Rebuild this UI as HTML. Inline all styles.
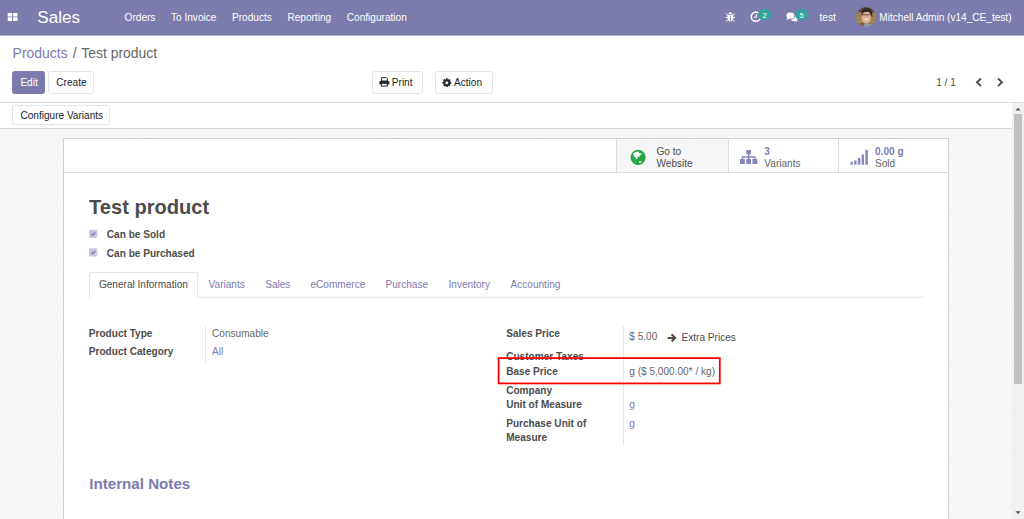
<!DOCTYPE html>
<html><head><meta charset="utf-8">
<style>
*{box-sizing:border-box;margin:0;padding:0}
html,body{width:1024px;height:519px;overflow:hidden;background:#fff;font-family:"Liberation Sans",sans-serif;color:#4c4c4c;font-size:10.08px}
.abs{position:absolute;white-space:nowrap}
#nav{left:0;top:0;width:1024px;height:35px;background:#7c7bad}
#nav .t{color:#fff;font-size:10.08px;top:12px;line-height:12px}
.btn{border:1px solid #e1e4e8;border-radius:2.5px;background:#fff}
.bt{color:#212529;font-size:10.08px;line-height:12px}
.lbl{font-weight:bold;color:#4c4c4c;font-size:10.08px;line-height:12px}
.val{color:#666;font-size:10.08px;line-height:12px}
.lnk{color:#7c7bad}
.dk{color:#4c4c4c}
.badge{background:#34a39b;border-radius:5.5px;color:#fff;font-size:7px;line-height:13px;font-weight:normal;text-align:center;width:12.8px;height:10.700px}
</style></head><body>
<div class="abs" id="nav"></div>
<div class="abs" style="left:0;top:34px;width:1024px;height:1px;background:#7878a9"></div>
<div class="abs" style="left:0;top:35px;width:1024px;height:1px;background:#aeadcd"></div>
<div class="abs" id="nav" style="background:none">
  <svg class="abs" style="left:7px;top:12px" width="12" height="10" viewBox="0 0 12 10"><g fill="#fff"><rect x="0.700" y="1" width="4.500" height="3.600" rx=".4"/><rect x="6" y="1" width="4.500" height="3.600" rx=".4"/><rect x="0.700" y="5.300" width="4.500" height="3.600" rx=".4"/><rect x="6" y="5.300" width="4.500" height="3.600" rx=".4"/></g></svg>
  <div class="abs t" style="left:37.3px;top:8px;font-size:17.05px;line-height:20px">Sales</div>
  <div class="abs t" style="left:124.6px">Orders</div>
  <div class="abs t" style="left:171px">To Invoice</div>
  <div class="abs t" style="left:232px">Products</div>
  <div class="abs t" style="left:287.4px">Reporting</div>
  <div class="abs t" style="left:346.8px">Configuration</div>
  <!-- bug -->
  <svg class="abs" style="left:725px;top:11px" width="11" height="12" viewBox="0 0 11 12"><g fill="none" stroke="#fff" stroke-width="1" stroke-linecap="butt"><path d="M0.900 2.600 L3 4.600 M9.800 2.600 L7.700 4.600 M0.600 6.400 H3 M10.100 6.400 H7.700 M1.100 10.600 L3 8.600 M9.600 10.600 L7.700 8.600"/></g><path d="M3.500 3 a1.850 1.800 0 0 1 3.700 0 z" fill="#fff"/><path d="M2.500 3.700 H8.200 V7.600 a2.850 2.800 0 0 1 -5.700 0 z" fill="#fff"/><rect x="5" y="4.600" width=".7" height="5.300" fill="#7c7bad"/></svg>
  <!-- clock -->
  <svg class="abs" style="left:750px;top:11px" width="12" height="12" viewBox="0 0 12 12"><circle cx="5.900" cy="5.700" r="4.600" fill="none" stroke="#fff" stroke-width="1.600"/><path d="M6.300 3.300 V6.200 H4" fill="none" stroke="#fff" stroke-width="1.100"/></svg>
  <div class="abs badge" style="left:758.3px;top:9px">2</div>
  <!-- comments -->
  <svg class="abs" style="left:785px;top:11px" width="14" height="12" viewBox="0 0 14 12"><ellipse cx="9.400" cy="7.500" rx="3.500" ry="2.700" fill="#fff"/><path d="M10.800 9.200 L12.900 10.900 L9.400 10z" fill="#fff"/><ellipse cx="5.400" cy="4.600" rx="4.400" ry="3.500" fill="#fff" stroke="#7c7bad" stroke-width=".9"/><path d="M2.300 6.600 L1.500 9 L4.700 7.700z" fill="#fff"/></svg>
  <div class="abs badge" style="left:795.2px;top:9px">5</div>
  <div class="abs t" style="left:819.5px">test</div>
  <!-- avatar -->
  <svg class="abs" style="left:856px;top:7px" width="20" height="20" viewBox="0 0 20 20"><defs><clipPath id="av"><circle cx="10" cy="10" r="9.900"/></clipPath><filter id="bl" x="-10%" y="-10%" width="120%" height="120%"><feGaussianBlur stdDeviation="0.4"/></filter></defs><g clip-path="url(#av)"><g filter="url(#bl)"><rect width="20" height="20" fill="#9a7b48"/><rect width="20" height="5" fill="#5e4a33"/><rect x="0" y="7" width="20" height="1" fill="#b2935c"/><rect x="0" y="10.500" width="20" height="1" fill="#b2935c"/><rect x="0" y="14" width="20" height="1" fill="#b2935c"/><path d="M1 20 Q4 14.500 10 15.500 Q17 15 19 20z" fill="#8b6244"/><path d="M7 20 Q8 16 12 16.300 Q16.500 16.500 17.500 20z" fill="#8d999b"/><ellipse cx="10.300" cy="10.200" rx="4.800" ry="6.300" fill="#dbb09a"/><path d="M5.300 8.500 Q4.800 1.500 10.500 1.300 Q17 1.300 16.300 9.500 Q15.600 10.500 15 8 Q14.500 5 12 4.700 Q7.500 4.300 6.200 7 Q5.800 8.500 5.300 8.500z" fill="#2f2622"/><rect x="6" y="7.300" width="8.800" height="1" fill="#4a3832" opacity=".85"/><ellipse cx="10.500" cy="12.200" rx="1.900" ry=".9" fill="#f2e4de"/></g></g></svg>
  <div class="abs t" style="left:879.3px">Mitchell Admin (v14_CE_test)</div>
</div>
<!-- control panel -->
<div class="abs" style="left:12.6px;top:44.3px;font-size:13.96px;line-height:18px;color:#7c7bad">Products</div>
<div class="abs" style="left:72.7px;top:44.3px;font-size:13.96px;line-height:18px;color:#666">/</div>
<div class="abs" style="left:81.2px;top:44.3px;font-size:13.96px;line-height:18px;color:#666">Test product</div>
<div class="abs btn" style="left:12px;top:71px;width:33px;height:23px;background:#7c7bad;border-color:#7c7bad"></div>
<div class="abs bt" style="left:20.4px;top:76.5px;color:#fff">Edit</div>
<div class="abs btn" style="left:48px;top:71px;width:46px;height:23px"></div>
<div class="abs bt" style="left:56.3px;top:76.5px">Create</div>
<div class="abs btn" style="left:372px;top:71px;width:51px;height:23px"></div>
<svg class="abs" style="left:379px;top:77px" width="11" height="10" viewBox="0 0 11 10"><path d="M2.400 0.700 H7.300 L8.400 1.800 V4 H2.400z" fill="#fff" stroke="#212529" stroke-width="1"/><path d="M0.400 4.900 a1 1 0 0 1 1 -1 H9.400 a1 1 0 0 1 1 1 V7.600 H0.400z" fill="#212529"/><rect x="2.400" y="6.300" width="6" height="2.800" fill="#fff" stroke="#212529" stroke-width="1"/></svg>
<div class="abs bt" style="left:391.8px;top:76.5px">Print</div>
<div class="abs btn" style="left:434.500px;top:71px;width:58px;height:23px"></div>
<svg class="abs" style="left:442px;top:78px" width="10" height="10" viewBox="0 0 10 10"><g transform="translate(4.800 4.700)"><g fill="#212529"><rect x="-1" y="-4.400" width="2" height="8.800" rx=".3"/><rect x="-1" y="-4.400" width="2" height="8.800" rx=".3" transform="rotate(45)"/><rect x="-1" y="-4.400" width="2" height="8.800" rx=".3" transform="rotate(90)"/><rect x="-1" y="-4.400" width="2" height="8.800" rx=".3" transform="rotate(135)"/><circle r="3.300"/></g><circle r="1.500" fill="#fff"/></g></svg>
<div class="abs bt" style="left:454px;top:76.5px">Action</div>
<div class="abs val dk" style="left:936.2px;top:76.6px">1 / 1</div>
<svg class="abs" style="left:974px;top:77px" width="10" height="11" viewBox="0 0 10 11"><path d="M7 1.500 L3 5.300 L7 9.100" fill="none" stroke="#4c4c4c" stroke-width="1.900"/></svg>
<svg class="abs" style="left:995px;top:77px" width="10" height="11" viewBox="0 0 10 11"><path d="M3 1.500 L7 5.300 L3 9.100" fill="none" stroke="#4c4c4c" stroke-width="1.900"/></svg>
<div class="abs" style="left:0;top:102px;width:1024px;height:1px;background:#dcdcdf"></div>
<!-- statusbar -->
<div class="abs btn" style="left:12px;top:105px;width:98px;height:20px"></div>
<div class="abs bt" style="left:20.4px;top:109.5px">Configure Variants</div>
<div class="abs" style="left:0;top:128px;width:1024px;height:1px;background:#d4d7de"></div>
<!-- content bg -->
<svg class="abs" style="left:0;top:129px" width="1012" height="390"><defs><pattern id="chk" width="3.1" height="3.1" patternUnits="userSpaceOnUse"><rect width="3.1" height="3.1" fill="#fdfdfd"/><rect width="1.55" height="1.55" fill="#f0f0f0"/><rect x="1.55" y="1.55" width="1.55" height="1.55" fill="#f0f0f0"/></pattern></defs><rect width="1012" height="390" fill="url(#chk)"/></svg>
<!-- scrollbar -->
<div class="abs" style="left:1012px;top:103px;width:12px;height:416px;background:#f1f1f1"></div>
<div class="abs" style="left:1014px;top:114px;width:8px;height:270px;background:#c1c1c1"></div>
<svg class="abs" style="left:1014px;top:106px" width="8" height="6" viewBox="0 0 8 6"><path d="M1.300 4.600 L4 1.700 L6.700 4.600z" fill="#555"/></svg>
<svg class="abs" style="left:1014px;top:510px" width="8" height="6" viewBox="0 0 8 6"><path d="M1.300 1.200 L4 4.100 L6.700 1.200z" fill="#555"/></svg>
<!-- sheet -->
<div class="abs" style="left:63px;top:138px;width:886px;height:400px;background:#fff;border:1px solid #cfcfda"></div>
<div class="abs" style="left:64px;top:172px;width:884px;height:1px;background:#dcdde2"></div>
<div class="abs" style="left:616px;top:139px;width:113px;height:33px;background:#f6f6f6;border-left:1px solid #d9dbe2;border-right:1px solid #d9dbe2"></div>
<div class="abs" style="left:838px;top:139px;width:1px;height:33px;background:#d9dbe2"></div>
<!-- globe -->
<svg class="abs" style="left:630px;top:149px" width="17" height="17" viewBox="0 0 17 17"><circle cx="8.100" cy="8.300" r="7.600" fill="#28a745"/><path d="M3.260 4.260 L5.520 3.010 L8.270 2.510 L9.020 4.010 L11.030 4.260 L11.780 5.270 L10.020 6.270 L9.020 8.020 L7.520 8.270 L7.520 9.520 L6.520 10.020 L4.770 8.270 L3.510 6.520z M9.020 12.030 L12.030 12.530 L10.520 13.780 L9.020 14.030z" fill="#fff" opacity=".95"/></svg>
<div class="abs val dk" style="left:656.5px;top:146px;line-height:12px">Go to<br>Website</div>
<!-- sitemap -->
<svg class="abs" style="left:739px;top:149px" width="20" height="17" viewBox="0 0 20 17"><g fill="#8685bb"><rect x="7.300" y="0.900" width="4.700" height="4.400" rx=".5"/><rect x="1" y="10" width="4.900" height="5.050" rx=".5"/><rect x="7.300" y="10" width="4.700" height="5.050" rx=".5"/><rect x="13.400" y="10" width="4.900" height="5.050" rx=".5"/></g><path d="M9.650 5 V10.300 M3.450 10.300 V8.050 H15.850 V10.300" fill="none" stroke="#8685bb" stroke-width="1.400"/></svg>
<div class="abs val" style="left:764.3px;top:146px;line-height:12px"><span class="lnk" style="font-weight:bold">3</span><br>Variants</div>
<!-- signal -->
<svg class="abs" style="left:850px;top:149px" width="19" height="17" viewBox="0 0 19 17"><g fill="#8685bb"><rect x="0.500" y="12.900" width="2.400" height="2.750"/><rect x="4.200" y="11.400" width="2.400" height="4.250"/><rect x="7.900" y="9" width="2.400" height="6.650"/><rect x="11.700" y="5.500" width="2.400" height="10.150"/><rect x="15.400" y="0.800" width="2.500" height="14.850"/></g></svg>
<div class="abs val" style="left:875px;top:146px;line-height:12px"><span class="lnk" style="font-weight:bold">0.00 g</span><br>Sold</div>
<div class="abs" style="left:89px;top:194.3px;font-size:20.1px;line-height:26px;font-weight:bold;color:#4c4c4c">Test product</div>
<svg class="abs" style="left:88px;top:229px" width="11" height="11" viewBox="0 0 11 11"><rect x="1.100" y="0.700" width="8.200" height="8.200" rx="1.300" fill="#c6c5df"/><path d="M3.300 5 L4.700 6.300 L7.200 3.300" fill="none" stroke="#7c7bad" stroke-width="1.300"/></svg>
<svg class="abs" style="left:88px;top:248px" width="11" height="11" viewBox="0 0 11 11"><rect x="1.100" y="0.300" width="8.200" height="8.200" rx="1.300" fill="#c6c5df"/><path d="M3.300 4.600 L4.700 5.900 L7.200 2.900" fill="none" stroke="#7c7bad" stroke-width="1.300"/></svg>
<div class="abs lbl" style="left:106.8px;top:229px">Can be Sold</div>
<div class="abs lbl" style="left:106.8px;top:248px">Can be Purchased</div>
<!-- tabs -->
<div class="abs" style="left:89px;top:296px;width:835px;height:1px;background:#f3f4f7"></div><div class="abs" style="left:89px;top:297px;width:835px;height:1px;background:#e8eaee"></div>
<div class="abs" style="left:89px;top:272px;width:109px;height:26px;background:#fff;border:1px solid #e4e6eb;border-bottom:none;border-radius:2px 2px 0 0"></div>
<div class="abs val dk" style="left:98.9px;top:279px">General Information</div>
<div class="abs val lnk" style="left:208.6px;top:279px">Variants</div>
<div class="abs val lnk" style="left:265.2px;top:279px">Sales</div>
<div class="abs val lnk" style="left:310.4px;top:279px">eCommerce</div>
<div class="abs val lnk" style="left:385.5px;top:279px">Purchase</div>
<div class="abs val lnk" style="left:448.5px;top:279px">Inventory</div>
<div class="abs val lnk" style="left:510.5px;top:279px">Accounting</div>
<!-- left group -->
<div class="abs lbl" style="left:88.8px;top:327.8px">Product Type</div>
<div class="abs lbl" style="left:88.8px;top:346.400px">Product Category</div>
<div class="abs" style="left:205px;top:326px;width:1px;height:37px;background:#e6e6e6"></div>
<div class="abs val" style="left:212px;top:327.8px">Consumable</div>
<div class="abs val lnk" style="left:212px;top:346.400px">All</div>
<!-- right group -->
<div class="abs" style="left:623px;top:326px;width:1px;height:119px;background:#e6e6e6"></div>
<div class="abs lbl" style="left:506.2px;top:328px">Sales Price</div>
<div class="abs val" style="left:629.3px;top:330.500px">$ 5.00</div>
<svg class="abs" style="left:667px;top:333px" width="10" height="10" viewBox="0 0 10 10"><path d="M0.600 4.900 H7.600 M4.600 1.300 L8.200 4.900 L4.600 8.500" fill="none" stroke="#4c4c4c" stroke-width="2" stroke-linejoin="miter"/></svg>
<div class="abs val dk" style="left:681.500px;top:332.200px">Extra Prices</div>
<div class="abs lbl" style="left:506.2px;top:351.200px">Customer Taxes</div>
<div class="abs lbl" style="left:506.2px;top:365.800px">Base Price</div>
<div class="abs val" style="left:629.3px;top:365.800px">g ($ 5,000.00* / kg)</div>
<div class="abs lbl" style="left:506.2px;top:384.500px">Company</div>
<div class="abs lbl" style="left:506.2px;top:399.300px">Unit of Measure</div>
<div class="abs val lnk" style="left:629.3px;top:399.300px">g</div>
<div class="abs lbl" style="left:506.2px;top:418px">Purchase Unit of</div>
<div class="abs lbl" style="left:506.2px;top:432px">Measure</div>
<div class="abs val lnk" style="left:629.3px;top:417.500px">g</div>
<svg class="abs" style="left:490px;top:350px" width="240" height="40" viewBox="0 0 240 40"><rect x="8.600" y="8.100" width="221.200" height="25.300" fill="none" stroke="#ff0000" stroke-width="1.800"/></svg>
<div class="abs" style="left:89.3px;top:474px;font-size:15.15px;line-height:20px;font-weight:bold;color:#7c7bad">Internal Notes</div>
</body></html>
